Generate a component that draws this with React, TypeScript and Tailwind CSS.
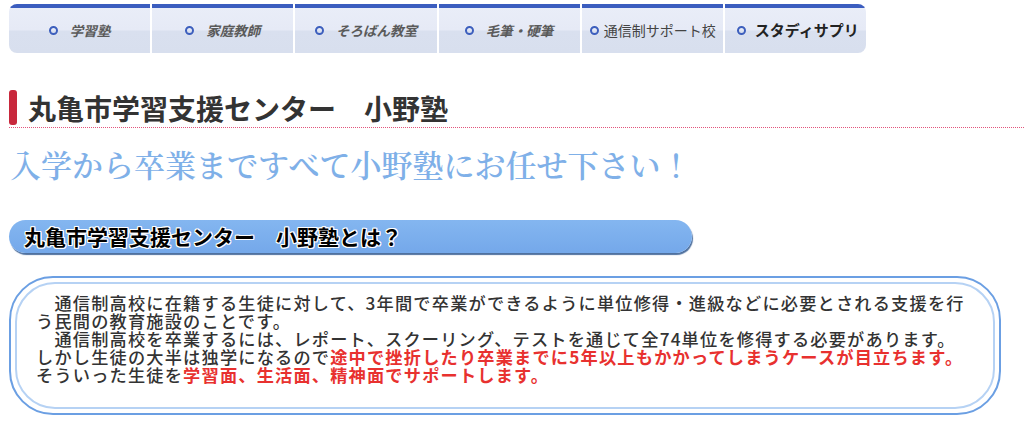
const tabs = [
  { label: "学習塾", kind: "img" },
  { label: "家庭教師", kind: "img" },
  { label: "そろばん教室", kind: "img" },
  { label: "毛筆・硬筆", kind: "img" },
  { label: "通信制サポート校", kind: "plain" },
  { label: "スタディサプリ", kind: "strong" },
];

function Ring() {
  return <span className="block h-[9px] w-[9px] shrink-0 rounded-full border-[2.5px] border-[#3d5fbd]" />;
}

function Nav() {
  return (
    <nav className="flex w-[857px] overflow-hidden rounded-lg">
      {tabs.map((t, i) => (
        <div
          key={t.label}
          className={
            "flex flex-1 flex-col " + (i < tabs.length - 1 ? "border-r-2 border-white" : "")
          }
        >
          <div className="h-[4px] bg-[#3b5dbf]" />
          <div
            className={
              "flex h-[45px] items-center bg-[linear-gradient(#e9edf8_0%,#e6eaf6_48%,#d9e0ef_52%,#d8dfee_100%)] " +
              (t.kind === "img"
                ? "justify-center gap-3"
                : t.kind === "plain"
                  ? "gap-[5px] pl-[8px]"
                  : "gap-[9px] pl-[12px]")
            }
          >
            <Ring />
            {t.kind === "img" && (
              <span className="text-[13.5px] font-bold italic text-[#5a5a5a]">{t.label}</span>
            )}
            {t.kind === "plain" && (
              <span className="whitespace-nowrap text-[14px] text-[#444]">{t.label}</span>
            )}
            {t.kind === "strong" && (
              <span className="whitespace-nowrap text-[15px] font-bold text-[#222]">{t.label}</span>
            )}
          </div>
        </div>
      ))}
    </nav>
  );
}

const outline =
  "[text-shadow:1px_0_0_#fff,-1px_0_0_#fff,0_1px_0_#fff,0_-1px_0_#fff,1px_1px_0_#fff,-1px_-1px_0_#fff,1px_-1px_0_#fff,-1px_1px_0_#fff]";

export default function App() {
  return (
    <div className="min-h-[436px] bg-white pl-[9px] pt-[4px] font-['Noto_Sans_CJK_JP',sans-serif]">
      <Nav />

      <div className="mt-[37px] border-b border-dotted border-[#e2557c] pb-[2px]">
        <div className="flex h-[35px] items-center gap-[11px]">
          <span className="block h-[35px] w-[8px] rounded-[3px] bg-[#c8283c]" />
          <h1 className="text-[28px] font-bold leading-none text-[#333]">
            丸亀市学習支援センター　小野塾
          </h1>
        </div>
      </div>

      <p className="mt-[18px] pl-[1px] font-['Noto_Serif_CJK_JP','Noto_Sans_CJK_JP',serif] text-[31px] font-semibold leading-[36px] text-[#7fb0e8]">
        入学から卒業まですべて小野塾にお任せ下さい！
      </p>

      <div className="mt-[38px] flex h-[33px] w-[683px] items-center rounded-full bg-[linear-gradient(#84b6f0,#74a8ea)] pl-[15px] shadow-[1px_2px_1px_#4f719f]">
        <h2 className={"text-[21px] font-bold leading-none text-black " + outline}>
          丸亀市学習支援センター　小野塾とは？
        </h2>
      </div>

      <div className="mt-[23px] w-[992px] rounded-[44px] border-2 border-[#6b9fe3] p-[4px]">
        <div className="rounded-[40px] border-2 border-[#b6d2f4] pb-[23px] pl-[19px] pt-[10px] text-[17.2px] leading-[18px] tracking-[1.2px] font-medium text-[#333]">
          <p>　通信制高校に在籍する生徒に対して、3年間で卒業ができるように単位修得・進級などに必要とされる支援を行</p>
          <p>う民間の教育施設のことです。</p>
          <p>　通信制高校を卒業するには、レポート、スクーリング、テストを通じて全74単位を修得する必要があります。</p>
          <p>
            しかし生徒の大半は独学になるので
            <span className="font-bold text-[#e8312f]">途中で挫折したり卒業までに5年以上もかかってしまうケースが目立ちます。</span>
          </p>
          <p>
            そういった生徒を
            <span className="font-bold text-[#e8312f]">学習面、生活面、精神面でサポートします。</span>
          </p>
        </div>
      </div>
    </div>
  );
}
